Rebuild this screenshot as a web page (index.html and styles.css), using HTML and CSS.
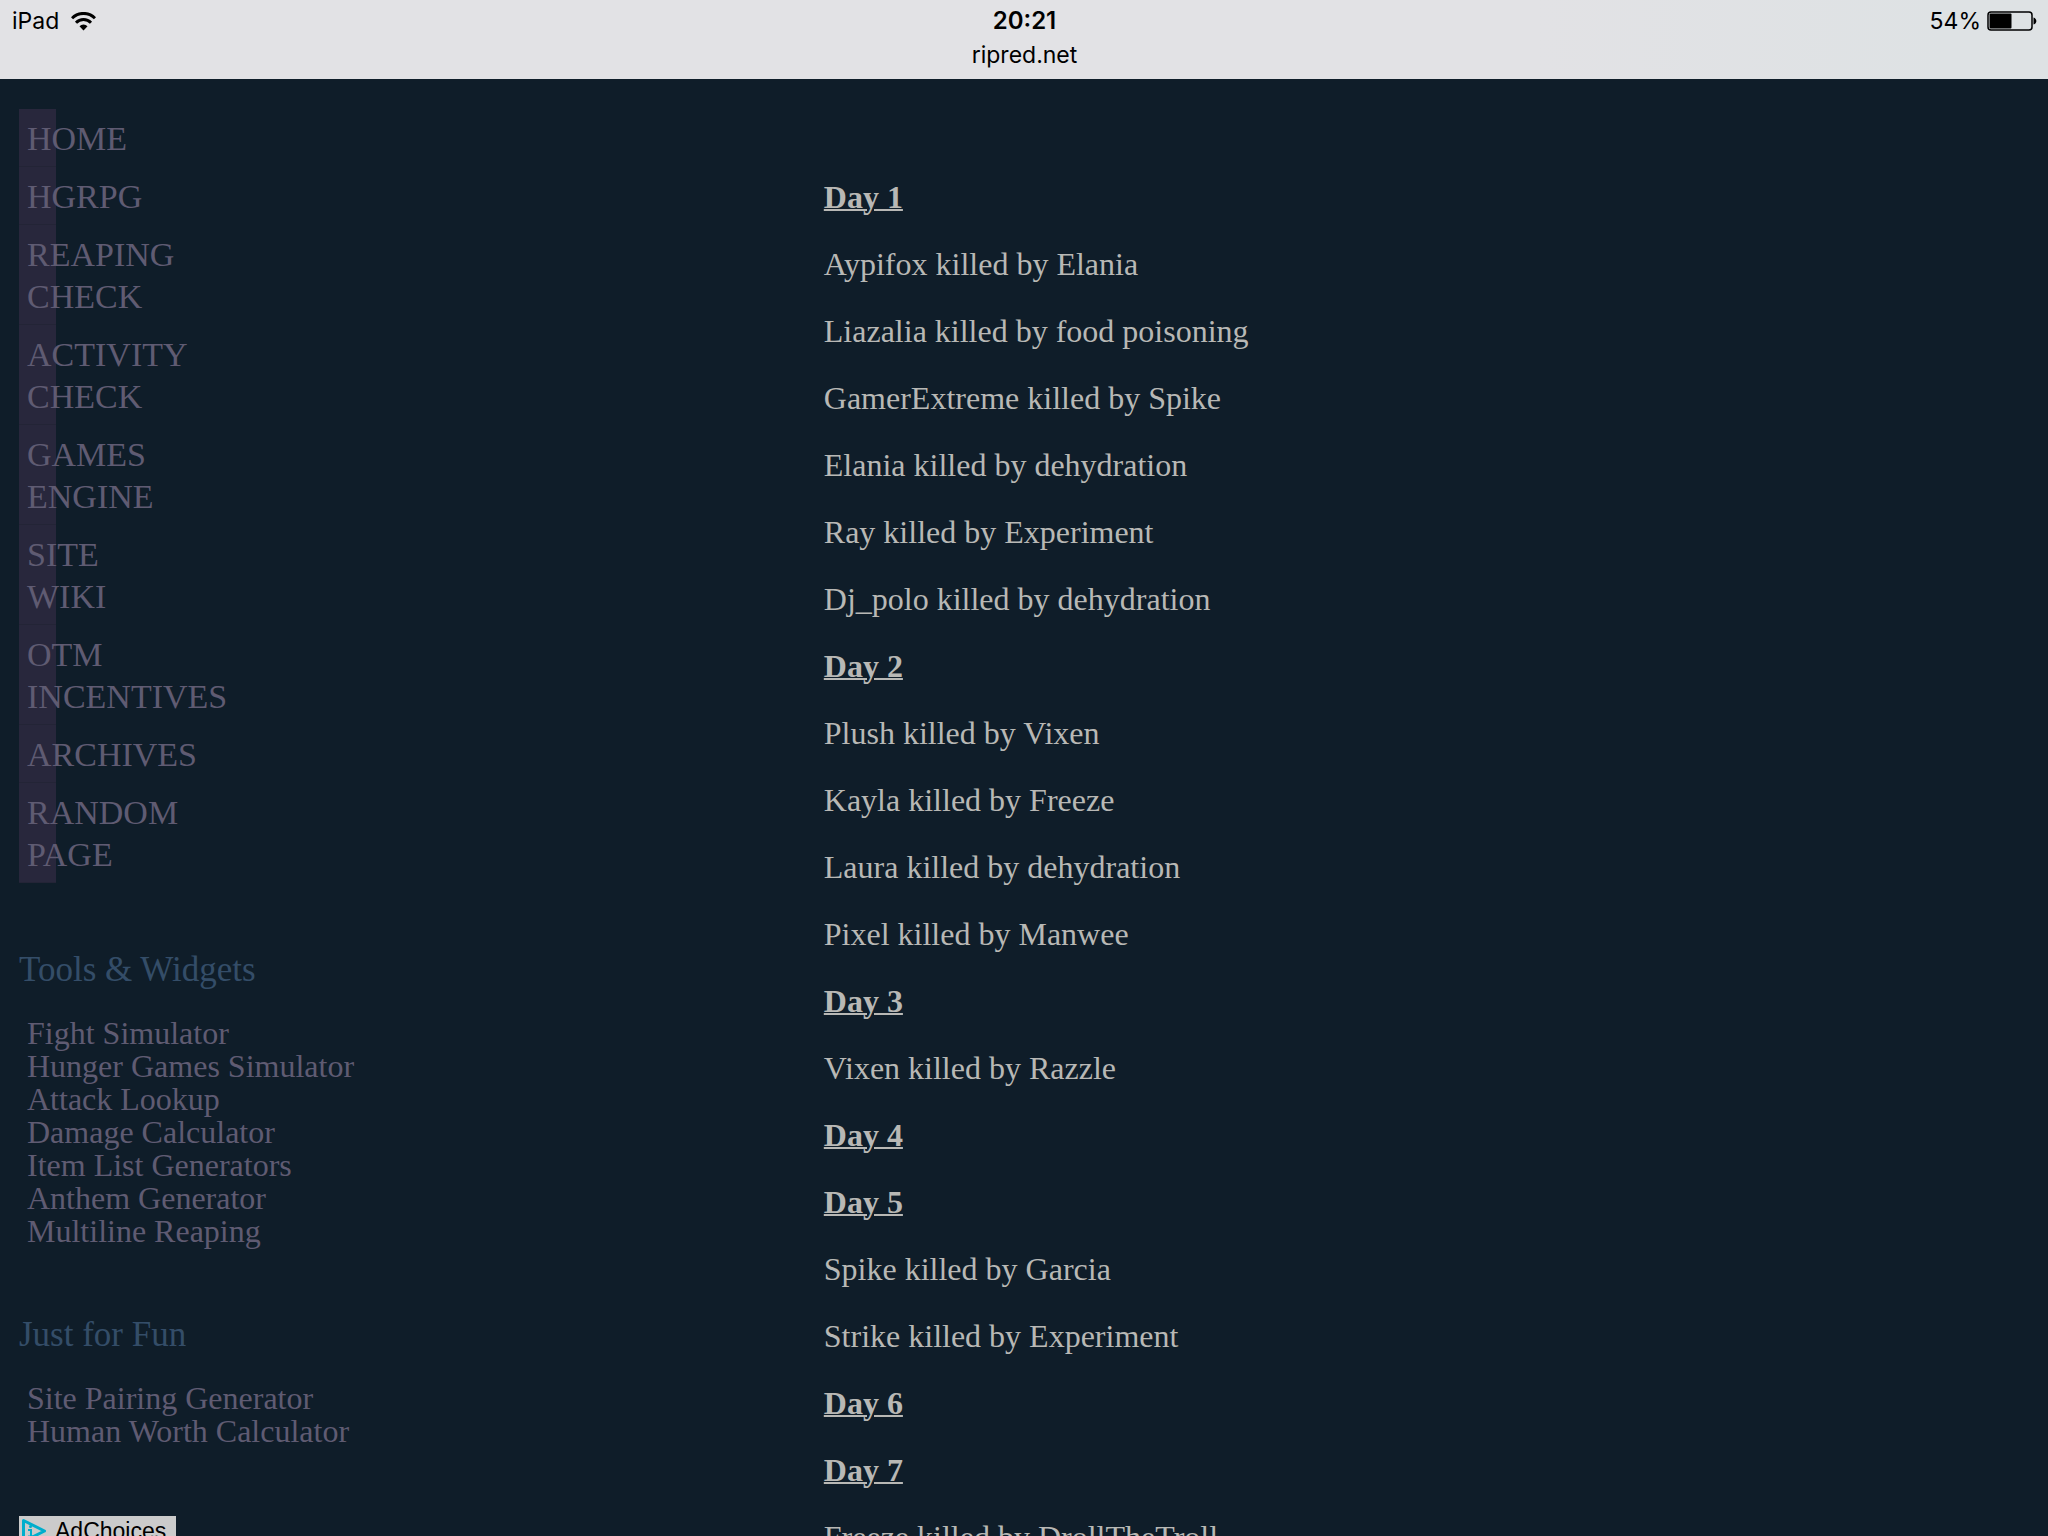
FILE: index.html
```html
<!DOCTYPE html>
<html lang="en">
<head>
    <meta charset="UTF-8">
    <meta name="viewport" content="width=device-width, initial-scale=1.0">
    <title>ripred.net</title>
    <link rel="stylesheet" href="styles.css">
</head>
<body>
    <header class="status-bar">
        <div class="device">
            <span>iPad</span>
            <svg class="wifi" viewBox="0 0 25 19" width="25" height="19">
                <path d="M1 6.300 A16 16 0 0 1 24 6.300" fill="none" stroke="#000" stroke-width="3"/>
                <path d="M5 10.700 A10.500 10.500 0 0 1 20 10.700" fill="none" stroke="#000" stroke-width="3"/>
                <path d="M8.500 14.300 A5.600 5.600 0 0 1 16.500 14.300 L12.500 18.500 Z"/>
            </svg>
        </div>
        <div class="center">
            <b class="time">20:21</b>
            <span>ripred.net</span>
        </div>
        <div class="power">
            <span>54%</span>
            <svg viewBox="0 0 50 20" width="50" height="20">
                <rect x="1" y="1" width="44" height="18" rx="3" fill="none" stroke="#000" stroke-width="1.5"/>
                <rect x="2.5" y="2.5" width="22" height="15" rx="1"/>
                <path d="M46.5 6.5 C50.3 7.5 50.3 12.5 46.5 13.5 Z"/>
            </svg>
        </div>
    </header>

    <div class="page">
        <aside class="sidebar">
            <nav>
                <ul class="menu">
                    <li><a href="#">HOME</a></li>
                    <li><a href="#">HGRPG</a></li>
                    <li><a href="#">REAPING CHECK</a></li>
                    <li><a href="#">ACTIVITY CHECK</a></li>
                    <li><a href="#">GAMES ENGINE</a></li>
                    <li><a href="#">SITE WIKI</a></li>
                    <li><a href="#">OTM INCENTIVES</a></li>
                    <li><a href="#">ARCHIVES</a></li>
                    <li><a href="#">RANDOM PAGE</a></li>
                </ul>
            </nav>

            <h2>Tools &amp; Widgets</h2>
            <ul class="links">
                <li><a href="#">Fight Simulator</a></li>
                <li><a href="#">Hunger Games Simulator</a></li>
                <li><a href="#">Attack Lookup</a></li>
                <li><a href="#">Damage Calculator</a></li>
                <li><a href="#">Item List Generators</a></li>
                <li><a href="#">Anthem Generator</a></li>
                <li><a href="#">Multiline Reaping</a></li>
            </ul>

            <h2>Just for Fun</h2>
            <ul class="links">
                <li><a href="#">Site Pairing Generator</a></li>
                <li><a href="#">Human Worth Calculator</a></li>
            </ul>

            <a class="ad-choices" href="#">
                <svg viewBox="0 0 26 26" width="26" height="26">
                    <path d="M2.5 2.5 L23.5 13 L2.5 23.5 Z" fill="none" stroke="#00aecd" stroke-width="3" stroke-linejoin="round"/>
                    <circle cx="9.5" cy="8.5" r="1.5" fill="#00aecd"/>
                    <path d="M7 12 H10 V18 M7 18.5 H13" fill="none" stroke="#00aecd" stroke-width="2"/>
                </svg>
                <span>AdChoices</span>
            </a>
        </aside>

        <main class="log">
            <h3>Day 1</h3>
            <p>Aypifox killed by Elania</p>
            <p>Liazalia killed by food poisoning</p>
            <p>GamerExtreme killed by Spike</p>
            <p>Elania killed by dehydration</p>
            <p>Ray killed by Experiment</p>
            <p>Dj_polo killed by dehydration</p>
            <h3>Day 2</h3>
            <p>Plush killed by Vixen</p>
            <p>Kayla killed by Freeze</p>
            <p>Laura killed by dehydration</p>
            <p>Pixel killed by Manwee</p>
            <h3>Day 3</h3>
            <p>Vixen killed by Razzle</p>
            <h3>Day 4</h3>
            <h3>Day 5</h3>
            <p>Spike killed by Garcia</p>
            <p>Strike killed by Experiment</p>
            <h3>Day 6</h3>
            <h3>Day 7</h3>
            <p>Freeze killed by DrollTheTroll</p>
        </main>
    </div>
</body>
</html>
```
FILE: styles.css
```css
* {
    box-sizing: border-box;
}
body {
    margin: 0;
    height: 100vh;
    overflow: hidden;
    background-color: #0f1d29;
    color: #b8b8b5;
    font-family: Georgia, "Liberation Serif", serif;
    font-size: 32px;
}
a {
    color: #5f5b72;
    text-decoration: none;
}
ul {
    list-style: none;
    margin: 0;
    padding: 0;
}
.status-bar {
    display: grid;
    grid-template-columns: 1fr auto 1fr;
    height: 79px;
    padding: 4px 11px 0 12px;
    background: linear-gradient(to right, #e2e2e5 75%, #dee2e4 95%);
    color: #000;
    font-family: Inter, sans-serif;
    font-size: 23px;
    line-height: 34px;
}
.device, .power {
    display: flex;
    align-items: center;
    height: 34px;
}
.device {
    gap: 12px;
}
.power {
    justify-content: flex-end;
    gap: 6px;
}
.center {
    display: flex;
    flex-direction: column;
    align-items: center;
}
.time {
    font-size: 24px;
    font-weight: 600;
}
.page {
    display: grid;
    grid-template-columns: 2fr 3fr;
    padding: 30px 17px 0 19px;
}
.menu a {
    display: block;
    width: 37px;
    padding: 9px 8px 6px;
    border-bottom: 1px solid #232436;
    background-color: #28273c;
    font-size: 34px;
    line-height: 42px;
}
.sidebar h2 {
    margin: 66px 0 26px;
    color: #344d68;
    font-size: 35px;
    font-weight: normal;
    line-height: 42px;
}
.links {
    padding-left: 8px;
    line-height: 33px;
}
.ad-choices {
    display: inline-flex;
    align-items: center;
    gap: 8px;
    margin-top: 68px;
    padding: 2px 10px 2px 2px;
    background-color: #cbcbcb;
    color: #000;
    font-family: "Liberation Sans", sans-serif;
    font-size: 23px;
    line-height: 26px;
}
.log {
    padding-top: 70px;
    line-height: 37px;
}
.log h3, .log p {
    margin: 0 0 30px;
}
.log h3 {
    font-size: 32px;
    text-decoration: underline;
    text-decoration-thickness: 2px;
}
```
